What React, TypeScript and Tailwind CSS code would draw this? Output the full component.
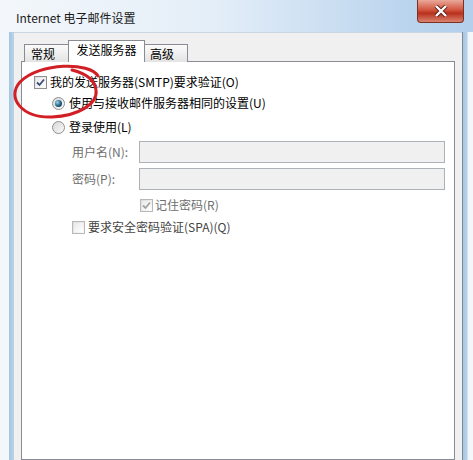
const Check = ({ checked, disabled }: { checked?: boolean; disabled?: boolean }) => (
  <span
    className={`flex h-[13px] w-[13px] shrink-0 items-center justify-center border ${
      disabled ? "border-[#b8b8b8]" : "border-[#8e8f8f]"
    } bg-[linear-gradient(135deg,#dcdcdc,#fbfbfb)] p-px`}
  >
    <span className="flex h-full w-full items-center justify-center bg-[linear-gradient(135deg,#e9e9e9,#ffffff)]">
      {checked && (
        <svg width="9" height="9" viewBox="0 0 9 9">
          <path
            d="M1 4.5 L3.5 7 L8 1.5"
            fill="none"
            stroke={disabled ? "#a3a3a3" : "#3a4e79"}
            strokeWidth="1.8"
          />
        </svg>
      )}
    </span>
  </span>
);

const Radio = ({ checked }: { checked?: boolean }) => (
  <span className="flex h-[13px] w-[13px] shrink-0 items-center justify-center rounded-full border border-[#8e8f8f] bg-[linear-gradient(135deg,#d6d6d6,#fbfbfb)]">
    {checked && (
      <span className="h-[7px] w-[7px] rounded-full bg-[radial-gradient(circle_at_35%_35%,#9fd6ee,#1c5c7c_55%,#0b2a3a)]" />
    )}
  </span>
);

const Field = ({ label }: { label: string }) => (
  <div className="ml-[50px] flex h-[22px] items-center">
    <span className="w-[67px] text-[#6d6d6d]">{label}</span>
    <span className="h-[22px] w-[306px] border border-[#adb2b8] bg-[#f0f0f0]" />
  </div>
);

export default function App() {
  return (
    <div
      className="relative h-[460px] w-[473px] overflow-hidden bg-[#f2f7fb] text-[12px] text-black"
      style={{ fontFamily: '"Noto Sans CJK SC", "Microsoft YaHei", sans-serif' }}
    >
      {/* title bar */}
      <div className="flex h-[32px] items-start justify-between bg-[linear-gradient(to_right,#f3f7fb,#e4eef8_45%,#bcd5ee_85%,#b3cfec)]">
        <span className="pl-[16px] pt-[9px] leading-[18px] text-[#1b1b1b]">Internet 电子邮件设置</span>
        <span className="mr-[9px] flex h-[23px] w-[47px] items-center justify-center rounded-b-[4px] border border-t-0 border-[#7d2f24] bg-[linear-gradient(to_bottom,#e9a99a,#d2553f_45%,#b9301c_60%,#d98470)]">
          <svg width="14" height="12" viewBox="0 0 14 12">
            <path d="M2 1 L12 11 M12 1 L2 11" stroke="#5a2018" strokeWidth="4.2" />
            <path d="M2 1 L12 11 M12 1 L2 11" stroke="#ffffff" strokeWidth="2.4" />
          </svg>
        </span>
      </div>

      <div className="flex h-[428px]">
        <div className="w-[14px] bg-[linear-gradient(to_right,#f2f7fb_0,#f2f7fb_9px,#a7c4e0_9px,#b9d3ea_14px)]" />
        <div className="flex flex-1 flex-col border-t border-[#c9d6e3] bg-[#f0f0f0] px-[7px] pt-[7px]">
          {/* tabs */}
          <div className="relative z-10 -mb-px flex h-[22px] items-end pl-[3px]">
            <span className="flex h-[18px] w-[45px] items-center border border-b-0 border-[#898c95] bg-[linear-gradient(to_bottom,#fbfbfb,#e3e3e3)] pl-[6px] pt-px">
              常规
            </span>
            <span className="-ml-px flex h-[22px] w-[77px] items-start justify-center border border-b-0 border-[#898c95] bg-white pt-[1px] leading-[16px]">
              发送服务器
            </span>
            <span className="-ml-px flex h-[18px] w-[44px] items-center border border-b-0 border-[#898c95] bg-[linear-gradient(to_bottom,#fbfbfb,#e3e3e3)] pl-[5px] pt-px">
              高级
            </span>
          </div>

          {/* panel */}
          <div className="flex flex-1 flex-col border border-[#898c95] bg-white pt-[10px] leading-[20px]">
            <div className="ml-[12px] flex h-[20px] items-center gap-[3px]">
              <Check checked />
              <span>我的发送服务器(SMTP)要求验证(O)</span>
            </div>
            <div className="ml-[30px] mt-px flex h-[20px] items-center gap-[4px]">
              <Radio checked />
              <span>使用与接收邮件服务器相同的设置(U)</span>
            </div>
            <div className="ml-[30px] mt-[4px] flex h-[20px] items-center gap-[4px]">
              <Radio />
              <span>登录使用(L)</span>
            </div>
            <div className="mt-[4px]">
              <Field label="用户名(N):" />
            </div>
            <div className="mt-[5px]">
              <Field label="密码(P):" />
            </div>
            <div className="ml-[118px] mt-[5px] flex h-[20px] items-center gap-[2px]">
              <Check checked disabled />
              <span className="text-[#6d6d6d]">记住密码(R)</span>
            </div>
            <div className="ml-[50px] mt-[2px] flex h-[20px] items-center gap-[3px]">
              <Check disabled />
              <span className="text-[#444]">要求安全密码验证(SPA)(Q)</span>
            </div>
          </div>
        </div>
        <div className="w-[11px] border-l border-[#7f8a96] bg-[linear-gradient(to_right,#a9c6e2_0,#b7d0e8_4px,#eef5fa_5px,#f6f9fc)]" />
      </div>

      {/* red annotation ring */}
      <svg className="pointer-events-none absolute left-0 top-0" width="473" height="460">
        <path
          d="M98 76 C 90 62, 40 62, 20 82 C 6 98, 22 118, 52 117 C 78 116, 98 104, 96 90 C 95 82, 88 74, 72 70"
          fill="none"
          stroke="#d21f26"
          strokeWidth="3"
          strokeLinecap="round"
        />
      </svg>
    </div>
  );
}
